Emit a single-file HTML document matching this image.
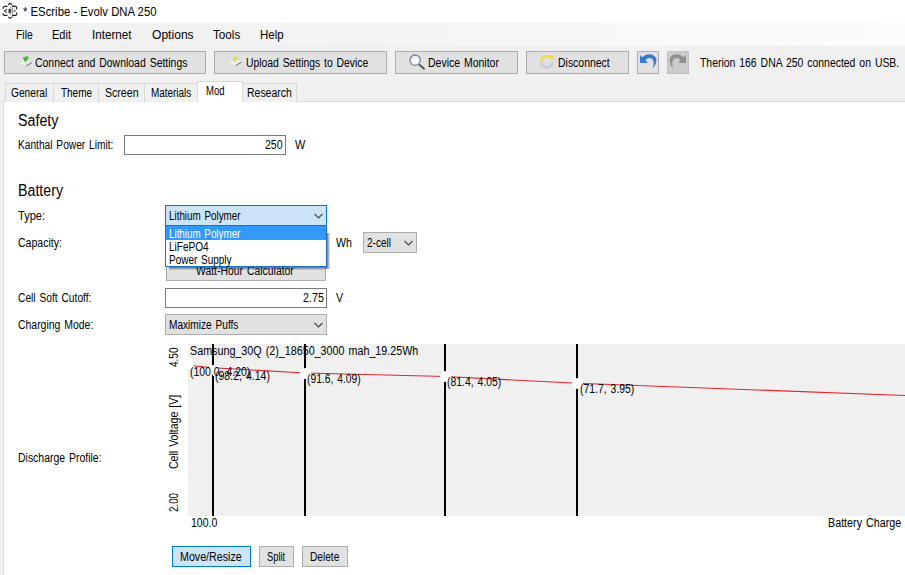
<!DOCTYPE html>
<html><head><meta charset="utf-8">
<style>
*{box-sizing:border-box;margin:0;padding:0}
html,body{width:905px;height:575px;overflow:hidden;background:#fff}
body{font-family:"Liberation Sans",sans-serif;font-size:12px;color:#000;position:relative}
.a{position:absolute}
.t{position:absolute;white-space:nowrap;transform-origin:0 0;display:block}
.btn{position:absolute;height:23px;top:51px;border:1px solid #adadad;background:#e1e1e1}
.tab{position:absolute;top:83px;height:19px;border:1px solid #d9d9d9;border-bottom:none;background:#f0f0f0}
.inp{position:absolute;height:20px;border:1px solid #7a7a7a;background:#fff}
.cmb{position:absolute;height:21px;border:1px solid #adadad;background:#e1e1e1}
.vl{position:absolute;top:344px;height:172px;width:2px;background:#000}
.dot{position:absolute;width:11px;height:11px;border-radius:5.5px;background:#fff;margin:-0.5px 0 0 -0.5px}
</style></head><body>
<div class="a" style="left:0;top:23px;width:905px;height:79px;background:#f0f0f0"></div>
<div class="a" style="left:0;top:23px;width:905px;height:23px;background:linear-gradient(90deg,#f0f0f0 0%,#fbfbfb 100%)"></div>
<svg class="a" style="left:0;top:0" width="24" height="23" viewBox="0 0 24 23" fill="none" stroke="#1e1e1e" stroke-width="1.1">
<path d="M8.1 4.8 L10 3.3 L12.1 4.8 M12.4 5.4 L12.6 6.4 L15.9 6.4 L16.7 7.5 L16.7 9.4 M16.7 12.5 L16.7 14.4 L15.9 15.4 L12.6 15.4 L12.3 16.4 M12.1 16.9 L10 18.4 L8.1 16.9 M7.5 15.4 L4.2 15.4 L3.2 14.4 L3.2 13.3 M3.2 8.8 L3.2 7.6 L4.2 6.4 L7.5 6.4"/>
<path d="M6.7 9.2 L5.6 10.2 M5.6 11.6 L6.7 12.6" />
<rect x="4.2" y="10.1" width="1.6" height="1.7" fill="#1e1e1e" stroke="none"/>
<ellipse cx="9.7" cy="10.9" rx="1.3" ry="2.7" fill="#3a3a3a" stroke="none"/>
<path d="M11.4 8.6 L11.4 13.2 L13.6 12 L13.6 9.8 Z" fill="#9a9a9a" stroke="none"/>
<path d="M14.2 10.4 L15.6 10.9 L14.2 11.5" stroke="#555" stroke-width="0.9"/>
<path d="M10 7.5 L10.8 7.5 M10 14.4 L10.8 14.4 M12.2 8.4 L13 8.4 M12.2 13.4 L13 13.4" stroke="#444" stroke-width="0.9"/>
</svg>
<!-- toolbar buttons -->
<div class="btn" style="left:4px;width:202px"></div>
<div class="btn" style="left:214px;width:173px"></div>
<div class="btn" style="left:395px;width:123px"></div>
<div class="btn" style="left:526px;width:103px"></div>
<div class="btn" style="left:637px;width:22px"></div>
<div class="btn" style="left:667px;width:22px;background:#cccccc;border-color:#bfbfbf"></div>
<svg class="a" style="left:0;top:0" width="905" height="575" viewBox="0 0 905 575">
<defs>
<linearGradient id="gd" x1="0" y1="0" x2="1" y2="1"><stop offset="0" stop-color="#ffffff"/><stop offset="1" stop-color="#dcdcdc"/></linearGradient>
<radialGradient id="gl" cx="0.6" cy="0.6" r="0.7"><stop offset="0" stop-color="#ffffff"/><stop offset="1" stop-color="#dfe6fb"/></radialGradient>
</defs>
<!-- connect icon -->
<path d="M19 63.8 L25 60.6 L32 62.3 L26.2 66 Z" fill="url(#gd)" opacity="0.95"/>
<path d="M26.2 65.9 L31.8 62.4" stroke="#8a8a8a" stroke-width="1.2" fill="none"/>
<path d="M22.8 57.4 L27.6 56 L28.6 58.2 L25.2 62.6 Z" fill="#3cb52c"/>
<path d="M24.3 56.9 L26.9 56.3 L27.2 58.4 Z" fill="#7fd86a"/>
<!-- upload icon -->
<path d="M228.8 62.6 L235 59.6 L241.8 61.8 L236 65.6 Z" fill="url(#gd)" opacity="0.95"/>
<path d="M236 65.5 L241.6 62" stroke="#6f7480" stroke-width="1" fill="none"/>
<ellipse cx="235.4" cy="59.2" rx="2.5" ry="2.6" fill="#f2d25a"/>
<ellipse cx="236.6" cy="60.6" rx="1.2" ry="1.1" fill="#fdf3c8"/>
<!-- magnifier -->
<path d="M419.4 64.8 L424 68.8" stroke="#5a5a5a" stroke-width="2" stroke-linecap="round" fill="none"/>
<circle cx="415.1" cy="60.2" r="5.2" fill="url(#gl)" stroke="#7f848e" stroke-width="1.3"/>
<!-- disconnect icon -->
<path d="M541.7 62 A5.3 5.3 0 0 1 551.4 58.4" stroke="#f4d84f" stroke-width="2.8" fill="none"/>
<path d="M549.4 55.6 L554 55.8 L553.6 60.6 Z" fill="#f4d84f"/>
<path d="M552.3 62.4 A5.3 5.3 0 0 1 543 65.4" stroke="#c9cdd9" stroke-width="2.8" fill="none"/>
<path d="M540 62.8 L544.8 63 L540.4 67.6 Z" fill="#c9cdd9"/>
<!-- undo -->
<path d="M640 55 L640 63 L648 63 L645.6 60.4 C647.3 57.6 651.5 57 653 60.2 C654.5 63 653.6 66.5 652.2 69.3 C655.6 65.5 657.6 61 655.6 57.5 C653 53.4 646.5 53 642.4 57.3 Z" fill="#3a78d6"/>
<!-- redo -->
<path d="M686 55 L686 63 L678 63 L680.4 60.4 C678.7 57.6 674.5 57 673 60.2 C671.5 63 672.4 66.5 673.8 69.3 C670.4 65.5 668.4 61 670.4 57.5 C673 53.4 679.5 53 683.6 57.3 Z" fill="#8f8f8f"/>
</svg>
<!-- tabs -->
<div class="a" style="left:0;top:101px;width:4px;height:474px;background:#f0f0f0"></div>
<div class="a" style="left:3px;top:101px;width:902px;height:474px;background:#fff;border-left:1px solid #dcdcdc;border-top:1px solid #dcdcdc"></div>
<div class="tab" style="left:5px;width:49px"></div>
<div class="tab" style="left:53px;width:46px"></div>
<div class="tab" style="left:98px;width:47px"></div>
<div class="tab" style="left:144px;width:54px"></div>
<div class="tab" style="left:242px;width:55px"></div>
<div class="tab" style="left:197px;width:46px;top:81px;height:21px;background:#fff"></div>
<!-- form -->
<div class="inp" style="left:124px;top:135px;width:162px"></div>
<div class="cmb" style="left:165px;top:205px;width:162px;background:#cce4f7;border-color:#0078d7"></div>
<div class="a" style="left:166px;top:258px;width:160px;height:23px;border:1px solid #adadad;background:#e1e1e1"></div>
<div class="cmb" style="left:363px;top:232px;width:54px"></div>
<div class="inp" style="left:165px;top:288px;width:162px"></div>
<div class="cmb" style="left:165px;top:314px;width:162px"></div>
<svg class="a" style="left:0;top:0" width="905" height="575" fill="none" stroke="#444" stroke-width="1.1">
<path d="M314.5 214 L318.5 218 L322.5 214"/>
<path d="M404.5 241 L408.5 245 L412.5 241"/>
<path d="M314.5 323 L318.5 327 L322.5 323"/>
</svg>
<!-- chart -->
<div class="a" style="left:188px;top:344px;width:717px;height:172px;background:#f0f0f0"></div>
<div class="vl" style="left:212px"></div>
<div class="vl" style="left:304px"></div>
<div class="vl" style="left:444px"></div>
<div class="vl" style="left:576px"></div>
<svg class="a" style="left:0;top:0" width="905" height="575" fill="none" stroke="#e4252b" stroke-width="1.15">
<polyline points="188,365.3 213,367.8 305,373 445.5,376.5 577.5,383.3 905,395.5"/>
</svg>
<div class="dot" style="left:183.5px;top:358.5px"></div>
<div class="dot" style="left:208px;top:365px"></div>
<div class="dot" style="left:300px;top:368px"></div>
<div class="dot" style="left:440.5px;top:371px"></div>
<div class="dot" style="left:572.5px;top:378.3px"></div>
<div class="a" style="left:170px;top:340px;width:18px;height:40px;background:#fff"></div>
<!-- bottom buttons -->
<div class="a" style="left:172px;top:546px;width:79px;height:21px;border:1px solid #0078d7;background:#cce4f7"></div>
<div class="a" style="left:259px;top:546px;width:35px;height:21px;border:1px solid #adadad;background:#e1e1e1"></div>
<div class="a" style="left:302px;top:546px;width:46px;height:21px;border:1px solid #adadad;background:#e1e1e1"></div>
<span class="t" style="left:22.90px;top:6.00px;font-size:12px;line-height:12px;transform:scaleX(0.9444)">* EScribe - Evolv DNA 250</span>
<span class="t" style="left:15.50px;top:29.00px;font-size:12px;line-height:12px;transform:scaleX(0.8650)">File</span>
<span class="t" style="left:52.30px;top:29.00px;font-size:12px;line-height:12px;transform:scaleX(0.9190)">Edit</span>
<span class="t" style="left:91.50px;top:29.00px;font-size:12px;line-height:12px;transform:scaleX(0.9683)">Internet</span>
<span class="t" style="left:151.50px;top:29.00px;font-size:12px;line-height:12px;transform:scaleX(1.0073)">Options</span>
<span class="t" style="left:212.50px;top:29.00px;font-size:12px;line-height:12px;transform:scaleX(0.9714)">Tools</span>
<span class="t" style="left:259.60px;top:29.00px;font-size:12px;line-height:12px;transform:scaleX(0.9560)">Help</span>
<span class="t" style="left:34.80px;top:57.00px;font-size:12px;line-height:12px;transform:scaleX(0.8709);word-spacing:1.2px">Connect and Download Settings</span>
<span class="t" style="left:245.70px;top:57.00px;font-size:12px;line-height:12px;transform:scaleX(0.8627);word-spacing:1.2px">Upload Settings to Device</span>
<span class="t" style="left:428.20px;top:57.00px;font-size:12px;line-height:12px;transform:scaleX(0.8732);word-spacing:1.2px">Device Monitor</span>
<span class="t" style="left:557.70px;top:57.00px;font-size:12px;line-height:12px;transform:scaleX(0.8717)">Disconnect</span>
<span class="t" style="left:700.00px;top:57.00px;font-size:12px;line-height:12px;transform:scaleX(0.8686);word-spacing:1.2px">Therion 166 DNA 250 connected on USB.</span>
<span class="t" style="left:10.70px;top:87.00px;font-size:12px;line-height:12px;transform:scaleX(0.8488)">General</span>
<span class="t" style="left:60.50px;top:87.00px;font-size:12px;line-height:12px;transform:scaleX(0.8289)">Theme</span>
<span class="t" style="left:105.00px;top:87.00px;font-size:12px;line-height:12px;transform:scaleX(0.8816)">Screen</span>
<span class="t" style="left:151.00px;top:87.00px;font-size:12px;line-height:12px;transform:scaleX(0.8265)">Materials</span>
<span class="t" style="left:206.00px;top:84.60px;font-size:12px;line-height:12px;transform:scaleX(0.7917)">Mod</span>
<span class="t" style="left:247.40px;top:87.00px;font-size:12px;line-height:12px;transform:scaleX(0.8725)">Research</span>
<span class="t" style="left:18.40px;top:112.60px;font-size:15.8px;line-height:15.8px;transform:scaleX(0.9022)">Safety</span>
<span class="t" style="left:17.60px;top:139.00px;font-size:12px;line-height:12px;transform:scaleX(0.8482);word-spacing:1.2px">Kanthal Power Limit:</span>
<span class="t" style="left:265.10px;top:139.00px;font-size:12px;line-height:12px;transform:scaleX(0.8750)">250</span>
<span class="t" style="left:295.30px;top:139.00px;font-size:12px;line-height:12px;transform:scaleX(0.9083)">W</span>
<span class="t" style="left:18.00px;top:182.60px;font-size:15.8px;line-height:15.8px;transform:scaleX(0.9000)">Battery</span>
<span class="t" style="left:17.70px;top:210.20px;font-size:12px;line-height:12px;transform:scaleX(0.9241)">Type:</span>
<span class="t" style="left:17.50px;top:236.80px;font-size:12px;line-height:12px;transform:scaleX(0.8760)">Capacity:</span>
<span class="t" style="left:17.50px;top:292.00px;font-size:12px;line-height:12px;transform:scaleX(0.8512);word-spacing:1.2px">Cell Soft Cutoff:</span>
<span class="t" style="left:17.50px;top:318.60px;font-size:12px;line-height:12px;transform:scaleX(0.8698);word-spacing:1.2px">Charging Mode:</span>
<span class="t" style="left:17.60px;top:452.30px;font-size:12px;line-height:12px;transform:scaleX(0.8716);word-spacing:1.2px">Discharge Profile:</span>
<span class="t" style="left:169.30px;top:210.00px;font-size:12px;line-height:12px;transform:scaleX(0.8205);word-spacing:1.2px">Lithium Polymer</span>
<span class="t" style="left:196.20px;top:264.50px;font-size:12px;line-height:12px;transform:scaleX(0.8673);word-spacing:1.2px">Watt-Hour Calculator</span>
<span class="t" style="left:336.20px;top:236.80px;font-size:12px;line-height:12px;transform:scaleX(0.8833)">Wh</span>
<span class="t" style="left:367.20px;top:236.80px;font-size:12px;line-height:12px;transform:scaleX(0.8379)">2-cell</span>
<span class="t" style="left:302.60px;top:292.00px;font-size:12px;line-height:12px;transform:scaleX(0.8917)">2.75</span>
<span class="t" style="left:336.20px;top:292.00px;font-size:12px;line-height:12px;transform:scaleX(0.8875)">V</span>
<span class="t" style="left:169.40px;top:318.60px;font-size:12px;line-height:12px;transform:scaleX(0.8427);word-spacing:1.2px">Maximize Puffs</span>
<span class="t" style="left:190.40px;top:344.60px;font-size:12px;line-height:12px;transform:scaleX(0.8945);word-spacing:1.2px">Samsung_30Q (2)_18650_3000 mah_19.25Wh</span>
<span class="t" style="left:190.40px;top:366.00px;font-size:12px;line-height:12px;transform:scaleX(0.8710);word-spacing:1.2px">(100.0, 4.20)</span>
<span class="t" style="left:215.10px;top:370.30px;font-size:12px;line-height:12px;transform:scaleX(0.8778);word-spacing:1.2px">(98.2, 4.14)</span>
<span class="t" style="left:307.00px;top:372.60px;font-size:12px;line-height:12px;transform:scaleX(0.8571);word-spacing:1.2px">(91.6, 4.09)</span>
<span class="t" style="left:447.00px;top:376.20px;font-size:12px;line-height:12px;transform:scaleX(0.8683);word-spacing:1.2px">(81.4, 4.05)</span>
<span class="t" style="left:579.60px;top:383.00px;font-size:12px;line-height:12px;transform:scaleX(0.8683);word-spacing:1.2px">(71.7, 3.95)</span>
<span class="t" style="left:190.70px;top:516.60px;font-size:12px;line-height:12px;transform:scaleX(0.8800)">100.0</span>
<span class="t" style="left:828.30px;top:516.90px;font-size:12px;line-height:12px;transform:scaleX(0.8951);word-spacing:1.2px">Battery Charge</span>
<span class="t" style="left:179.90px;top:550.50px;font-size:12px;line-height:12px;transform:scaleX(0.8900)">Move/Resize</span>
<span class="t" style="left:266.50px;top:550.50px;font-size:12px;line-height:12px;transform:scaleX(0.7750)">Split</span>
<span class="t" style="left:309.80px;top:550.50px;font-size:12px;line-height:12px;transform:scaleX(0.8457)">Delete</span>
<span class="t" style="left:168.30px;top:367.00px;font-size:12px;line-height:12px;word-spacing:1.2px;transform:rotate(-90deg) scaleX(0.8333)">4.50</span>
<span class="t" style="left:168.30px;top:469.40px;font-size:12px;line-height:12px;word-spacing:1.2px;transform:rotate(-90deg) scaleX(0.8786)">Cell Voltage [V]</span>
<span class="t" style="left:168.30px;top:512.00px;font-size:12px;line-height:12px;word-spacing:1.2px;transform:rotate(-90deg) scaleX(0.8167)">2.00</span>
<!-- popup -->
<div class="a" style="left:327px;top:233px;width:3px;height:36px;z-index:9;background:linear-gradient(to right,rgba(15,35,65,.6),rgba(15,35,65,.3) 60%,rgba(15,35,65,.05))"></div>
<div class="a" style="left:169px;top:267px;width:158px;height:3px;z-index:9;background:linear-gradient(to bottom,rgba(15,35,65,.6),rgba(15,35,65,.3) 60%,rgba(15,35,65,.05))"></div>
<div class="a" style="left:165px;top:225px;width:162px;height:42px;background:#fff;border:1px solid #1570c8;z-index:10"></div>
<div class="a" style="left:166px;top:226px;width:160px;height:14px;background:#3399ff;z-index:11"></div>
<span class="t" style="left:168.50px;top:228.00px;font-size:12px;line-height:12px;transform:scaleX(0.8182);color:#fff;word-spacing:1.2px;z-index:12">Lithium Polymer</span>
<span class="t" style="left:168.50px;top:241.00px;font-size:12px;line-height:12px;transform:scaleX(0.8375);z-index:12">LiFePO4</span>
<span class="t" style="left:168.50px;top:254.00px;font-size:12px;line-height:12px;transform:scaleX(0.8303);word-spacing:1.2px;z-index:12">Power Supply</span>
</body></html>
